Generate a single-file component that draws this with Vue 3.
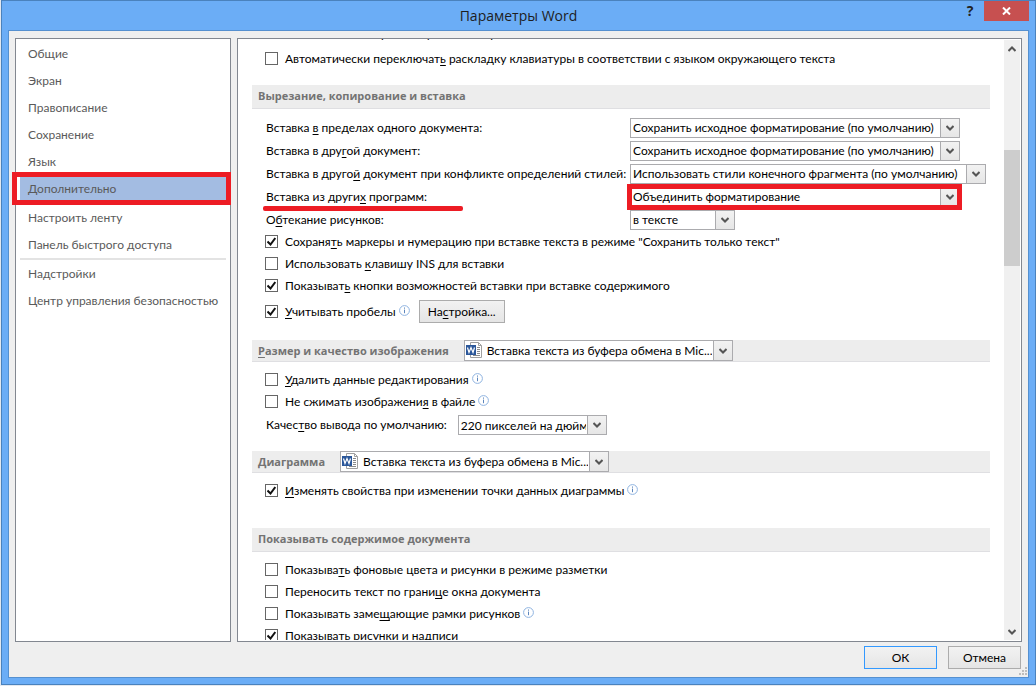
<script setup>
import { ref } from 'vue'

const navGroups = [
  ['Общие', 'Экран', 'Правописание', 'Сохранение', 'Язык', 'Дополнительно'],
  ['Настроить ленту', 'Панель быстрого доступа'],
  ['Надстройки', 'Центр управления безопасностью'],
]
const active = ref('Дополнительно')

// Each label is split around its underlined access key.
const pasteSelects = [
  { id: 'p1', text: ['Вставка ', 'в', ' пределах одного документа:'], value: 'Сохранить исходное форматирование (по умолчанию)', size: 'wide' },
  { id: 'p2', text: ['Вставка в дру', 'г', 'ой документ:'], value: 'Сохранить исходное форматирование (по умолчанию)', size: 'wide' },
  { id: 'p3', text: ['Вставка в друго', 'й', ' документ при конфликте определений стилей:'], value: 'Использовать стили конечного фрагмента (по умолчанию)', size: 'widest' },
  { id: 'p4', text: ['Вставка из други', 'х', ' программ:'], value: 'Объединить форматирование', size: 'wide', marked: true },
  { id: 'p5', text: ['О', 'б', 'текание рисунков:'], value: 'в тексте', size: 'small' },
]
const docName = 'Вставка текста из буфера обмена в Mic...'

const sections = [
  {
    key: 'keyboard',
    checks: [
      { id: 'k1', text: ['Автоматически переключат', 'ь', ' раскладку клавиатуры в соответствии с языком окружающего текста'], on: false },
    ],
  },
  {
    key: 'paste',
    head: ['Вырезание, копирование и вставка', '', ''],
    selects: true,
    checks: [
      { id: 'c1', text: ['Сохраня', 'т', 'ь маркеры и нумерацию при вставке текста в режиме "Сохранить только текст"'], on: true },
      { id: 'c2', text: ['Использовать ', 'к', 'лавишу INS для вставки'], on: false },
      { id: 'c3', text: ['Показыват', 'ь', ' кнопки возможностей вставки при вставке содержимого'], on: true },
      { id: 'c4', text: ['', 'У', 'читывать пробелы'], on: true, info: true, setup: true },
    ],
  },
  {
    key: 'image',
    head: ['', 'Р', 'азмер и качество изображения'],
    doc: true,
    checks: [
      { id: 'i1', text: ['', 'У', 'далить данные редактирования'], on: false, info: true },
      { id: 'i2', text: ['Не сжимать изображени', 'я', ' в файле'], on: false, info: true },
    ],
  },
  {
    key: 'chart',
    head: ['Диаграмма', '', ''],
    doc: true,
    checks: [
      { id: 'd1', text: ['', 'И', 'зменять свойства при изменении точки данных диаграммы'], on: true, info: true },
    ],
  },
  {
    key: 'content',
    head: ['Показывать содержимое документа', '', ''],
    checks: [
      { id: 's1', text: ['Показыва', 'т', 'ь фоновые цвета и рисунки в режиме разметки'], on: false },
      { id: 's2', text: ['Переносить текст по грани', 'ц', 'е окна документа'], on: false },
      { id: 's3', text: ['Показывать заме', 'щ', 'ающие рамки рисунков'], on: false, info: true },
      { id: 's4', text: ['Показывать рисунки и надписи', '', ''], on: true },
    ],
  },
]
</script>

<template>
  <div class="window">
    <header class="titlebar">
      <h1>Параметры Word</h1>
      <div class="caption">
        <button class="help" type="button" aria-label="Справка">?</button>
        <button class="close" type="button" aria-label="Закрыть">
          <svg width="9" height="8" viewBox="0 0 9 8"><path d="M1 .5 8 7.5M8 .5 1 7.5" stroke="#fff" stroke-width="2" /></svg>
        </button>
      </div>
    </header>

    <div class="client">
      <div class="panes">
        <nav class="sidebar">
          <ul v-for="(group, i) in navGroups" :key="i">
            <li v-for="item in group" :key="item">
              <button type="button" :class="{ active: item === active }" @click="active = item">{{ item }}</button>
            </li>
          </ul>
        </nav>

        <main class="pane">
          <div class="scroll">
            <p class="clipped">Не использовать разметку в тексте правок</p>

            <section v-for="s in sections" :key="s.key" :class="s.key">
              <h2 v-if="s.head" :class="s.doc ? 'h-doc' : 'h-tall'">
                <label :for="s.doc ? 'doc-' + s.key : undefined">{{ s.head[0] }}<u>{{ s.head[1] }}</u>{{ s.head[2] }}</label>
                <span v-if="s.doc" class="combo doc">
                  <svg class="word" width="17" height="16" viewBox="0 0 17 16">
                    <path d="M4.5 .5h8l3 3v12h-11z" fill="#fff" stroke="#a0a0a0" />
                    <path d="M12.5 .5v3h3" fill="none" stroke="#a0a0a0" />
                    <path d="M11 5.5h3M11 7.5h3M11 9.5h3M11 11.5h3M7 13.5h7" stroke="#8a8a8a" />
                    <path d="M0 3h10v10H0z" fill="#2b579a" />
                    <path d="M1.5 5.5 3 10.5 5 5.5 7 10.5 8.5 5.5" fill="none" stroke="#fff" stroke-width="1.2" />
                  </svg>
                  <select :id="'doc-' + s.key"><option>{{ docName }}</option></select>
                  <span class="drop"><svg width="8" height="6" viewBox="0 0 8 6"><path d="M.5 1 4 4.5 7.5 1" /></svg></span>
                </span>
              </h2>

              <div v-if="s.selects" class="fields">
                <div v-for="f in pasteSelects" :key="f.id" class="field">
                  <label :for="f.id" :class="{ underlined: f.marked }">{{ f.text[0] }}<u>{{ f.text[1] }}</u>{{ f.text[2] }}</label>
                  <span class="combo" :class="[f.size, { marked: f.marked }]">
                    <select :id="f.id"><option>{{ f.value }}</option></select>
                    <span class="drop"><svg width="8" height="6" viewBox="0 0 8 6"><path d="M.5 1 4 4.5 7.5 1" /></svg></span>
                  </span>
                </div>
              </div>

              <div v-for="c in s.checks" :key="c.id" class="check" :class="{ roomy: c.setup }">
                <span class="box">
                  <input :id="c.id" type="checkbox" :checked="c.on" />
                  <svg width="9" height="9" viewBox="0 0 9 9"><path d="M.5 4.5 3.5 7.5 8.3 1" /></svg>
                </span>
                <label :for="c.id">{{ c.text[0] }}<u>{{ c.text[1] }}</u>{{ c.text[2] }}</label>
                <svg v-if="c.info" class="info" width="11" height="11" viewBox="0 0 11 11">
                  <circle cx="5.5" cy="5.5" r="4.9" />
                  <path d="M5.5 2.5v1.2M5.5 4.6v3.6" />
                </svg>
                <button v-if="c.setup" class="btn setup" type="button">На<u>с</u>тройка...</button>
              </div>

              <div v-if="s.key === 'image'" class="quality">
                <label for="ppi">Качес<u>т</u>во вывода по умолчанию:</label>
                <span class="combo ppi">
                  <select id="ppi"><option>220 пикселей на дюйм</option></select>
                  <span class="drop"><svg width="8" height="6" viewBox="0 0 8 6"><path d="M.5 1 4 4.5 7.5 1" /></svg></span>
                </span>
              </div>
            </section>
          </div>

          <div class="scrollbar">
            <button type="button" aria-label="Вверх"><svg width="8" height="6" viewBox="0 0 8 6"><path d="M.5 5 4 1.5 7.5 5" /></svg></button>
            <div class="track"><div class="thumb"></div></div>
            <button type="button" aria-label="Вниз"><svg width="8" height="6" viewBox="0 0 8 6"><path d="M.5 1 4 4.5 7.5 1" /></svg></button>
          </div>
        </main>
      </div>

      <footer class="footer">
        <button class="btn primary" type="button">ОК</button>
        <button class="btn" type="button">Отмена</button>
        <svg class="grip" width="8" height="8" viewBox="0 0 8 8">
          <path d="M6 0h2v2H6zM3 3h2v2H3zM6 3h2v2H6zM0 6h2v2H0zM3 6h2v2H3zM6 6h2v2H6z" fill="#bdbdbd" />
        </svg>
      </footer>
    </div>
  </div>
</template>

<style>
body { background: #e3e8ef; }
</style>

<style scoped>
* { box-sizing: border-box; }
.window {
  display: flex;
  flex-direction: column;
  height: calc(100vh - 1px);
  margin: 0 0 1px 1px;
  padding: 0 6px 6px;
  border: 1px solid #4a82bd;
  background: #6badf6;
  font: 12px/16px Lato, "Open Sans", "Noto Sans", sans-serif;
  color: #000;
}
button, select, input { font: inherit; color: inherit; margin: 0; }
button { padding: 0; border: 0; background: none; }
u { text-underline-offset: 2px; }

.titlebar { display: grid; grid-template-columns: 1fr auto 1fr; flex: none; height: 29px; }
h1 {
  grid-column: 2;
  margin: 0;
  font: 400 14px/29px "Open Sans", sans-serif;
  color: #1e1e1e;
}
.caption { display: flex; justify-content: flex-end; align-items: flex-start; }
.help { width: 28px; height: 20px; font: 700 14px/20px "Open Sans", sans-serif; color: #222; }
.close { display: flex; align-items: center; justify-content: center; width: 45px; height: 20px; background: #c75050; }

.client {
  display: flex;
  flex-direction: column;
  flex: 1;
  min-height: 0;
  padding: 7px 6px 0;
  border: 1px solid #5590d0;
  background: #efefef;
}
.panes { display: flex; flex: 1; gap: 6px; min-height: 0; }
.sidebar, .pane { border: 1px solid #828790; background: #fff; }
.sidebar { flex: none; width: 216px; padding-top: 1px; }
ul { list-style: none; margin: 0; padding: 0 4px; }
ul + ul { padding-top: 2px; }
ul:last-child { margin: 0 4px; padding: 0; border-top: 2px solid #e3e3e3; }
li button {
  position: relative;
  display: block;
  width: 100%;
  height: 27px;
  padding-left: 8px;
  text-align: left;
  line-height: 27px;
  white-space: nowrap;
  color: #5a5a5a;
}
li button.active { background: #a3bce2; }
li button.active::after {
  content: "";
  position: absolute;
  inset: -3px -5px -3px -8px;
  border: 5px solid #ed1c24;
}

.pane { display: flex; flex: 1; min-width: 0; padding: 1px; }
.scroll { flex: 1; min-width: 0; overflow: hidden; padding: 0 14px 0 13px; margin-top: -1px; }
.clipped { height: 22px; margin: -16px 0 0 33px; line-height: 22px; }
.keyboard { margin-top: 3px; }
h2 {
  display: flex;
  gap: 15px;
  margin: 0;
  padding-left: 6px;
  border-bottom: 1px solid #dfdfe2;
  background: #ededed;
  font: 700 11px/22px "Open Sans", sans-serif;
  color: #737373;
}
.h-tall { height: 24px; }
.h-doc { height: 22px; }
.paste h2 { margin: 15px 0 9px; }
.image h2 { margin: 17px 0 7px; }
.chart h2 { margin: 16px 0 7px; }
.content h2 { margin: 26px 0 7px; }

.fields { display: grid; gap: 3px; padding-left: 14px; margin-bottom: 1px; }
.field { display: grid; grid-template-columns: 364px 1fr; height: 20px; }
.field label { position: relative; justify-self: start; line-height: 20px; white-space: nowrap; }
.underlined::after {
  content: "";
  position: absolute;
  left: -3px;
  top: 19px;
  width: 200px;
  height: 5px;
  border-radius: 2px;
  background: #ed1c24;
}
.combo { position: relative; display: block; height: 20px; }
.wide { width: 330px; }
.widest { width: 356px; }
.small { width: 105px; }
.ppi { width: 149px; }
.doc { width: 269px; height: 21px; font: 12px/16px Lato, sans-serif; color: #000; }
select {
  display: block;
  width: 100%;
  height: 100%;
  padding: 0 20px 0 2px;
  border: 1px solid #ababae;
  border-radius: 0;
  background: #fff;
  appearance: none;
  outline: 0;
}
.doc select { padding-left: 22px; }
.word { position: absolute; left: 2px; top: 2px; }
.drop {
  position: absolute;
  right: 0;
  top: 0;
  bottom: 0;
  width: 20px;
  display: flex;
  align-items: center;
  justify-content: center;
  border: 1px solid #ababae;
  background: linear-gradient(#f2f2f2, #e6e6e6);
  pointer-events: none;
}
.drop path, .scrollbar path { fill: none; stroke: #555; stroke-width: 2; }
.marked::after {
  content: "";
  position: absolute;
  inset: -3px -2px -3px -3px;
  border: 5px solid #ed1c24;
  pointer-events: none;
}

.check { display: flex; align-items: center; height: 22px; padding-left: 13px; white-space: nowrap; }
.box { position: relative; flex: none; width: 13px; height: 13px; margin: 0 7px 1px 0; }
.box input { display: block; width: 13px; height: 13px; border: 1px solid #666; background: #fff; appearance: none; }
.box svg { position: absolute; left: 2px; top: 2px; visibility: hidden; pointer-events: none; }
.box input:checked + svg { visibility: visible; }
.box path { fill: none; stroke: #111; stroke-width: 2; }
.info { flex: none; margin: 0 0 3px 3px; }
.info circle { fill: #fff; stroke: #8fb3e0; }
.info path { stroke: #5c86bd; }
.roomy { height: 23px; margin-top: 3px; }
.btn { height: 23px; border: 1px solid #acacac; background: linear-gradient(#f2f2f2, #e5e5e5); line-height: 21px; }
.setup { width: 86px; margin-left: 9px; }
.quality { display: flex; gap: 11px; padding: 2px 0 0 14px; line-height: 20px; }

.scrollbar { display: flex; flex-direction: column; flex: none; width: 16px; background: #f0f0f0; }
.scrollbar button { display: flex; align-items: center; justify-content: center; height: 17px; }
.track { flex: 1; padding-top: 93px; }
.thumb { height: 20%; min-height: 116px; background: #cdcdcd; }

.footer { position: relative; display: flex; flex: none; justify-content: flex-end; gap: 11px; height: 35px; padding: 4px 1px 0 0; }
.footer .btn { width: 73px; }
.footer .primary { border-color: #3399ff; }
.grip { position: absolute; right: -5px; bottom: 2px; }
</style>
